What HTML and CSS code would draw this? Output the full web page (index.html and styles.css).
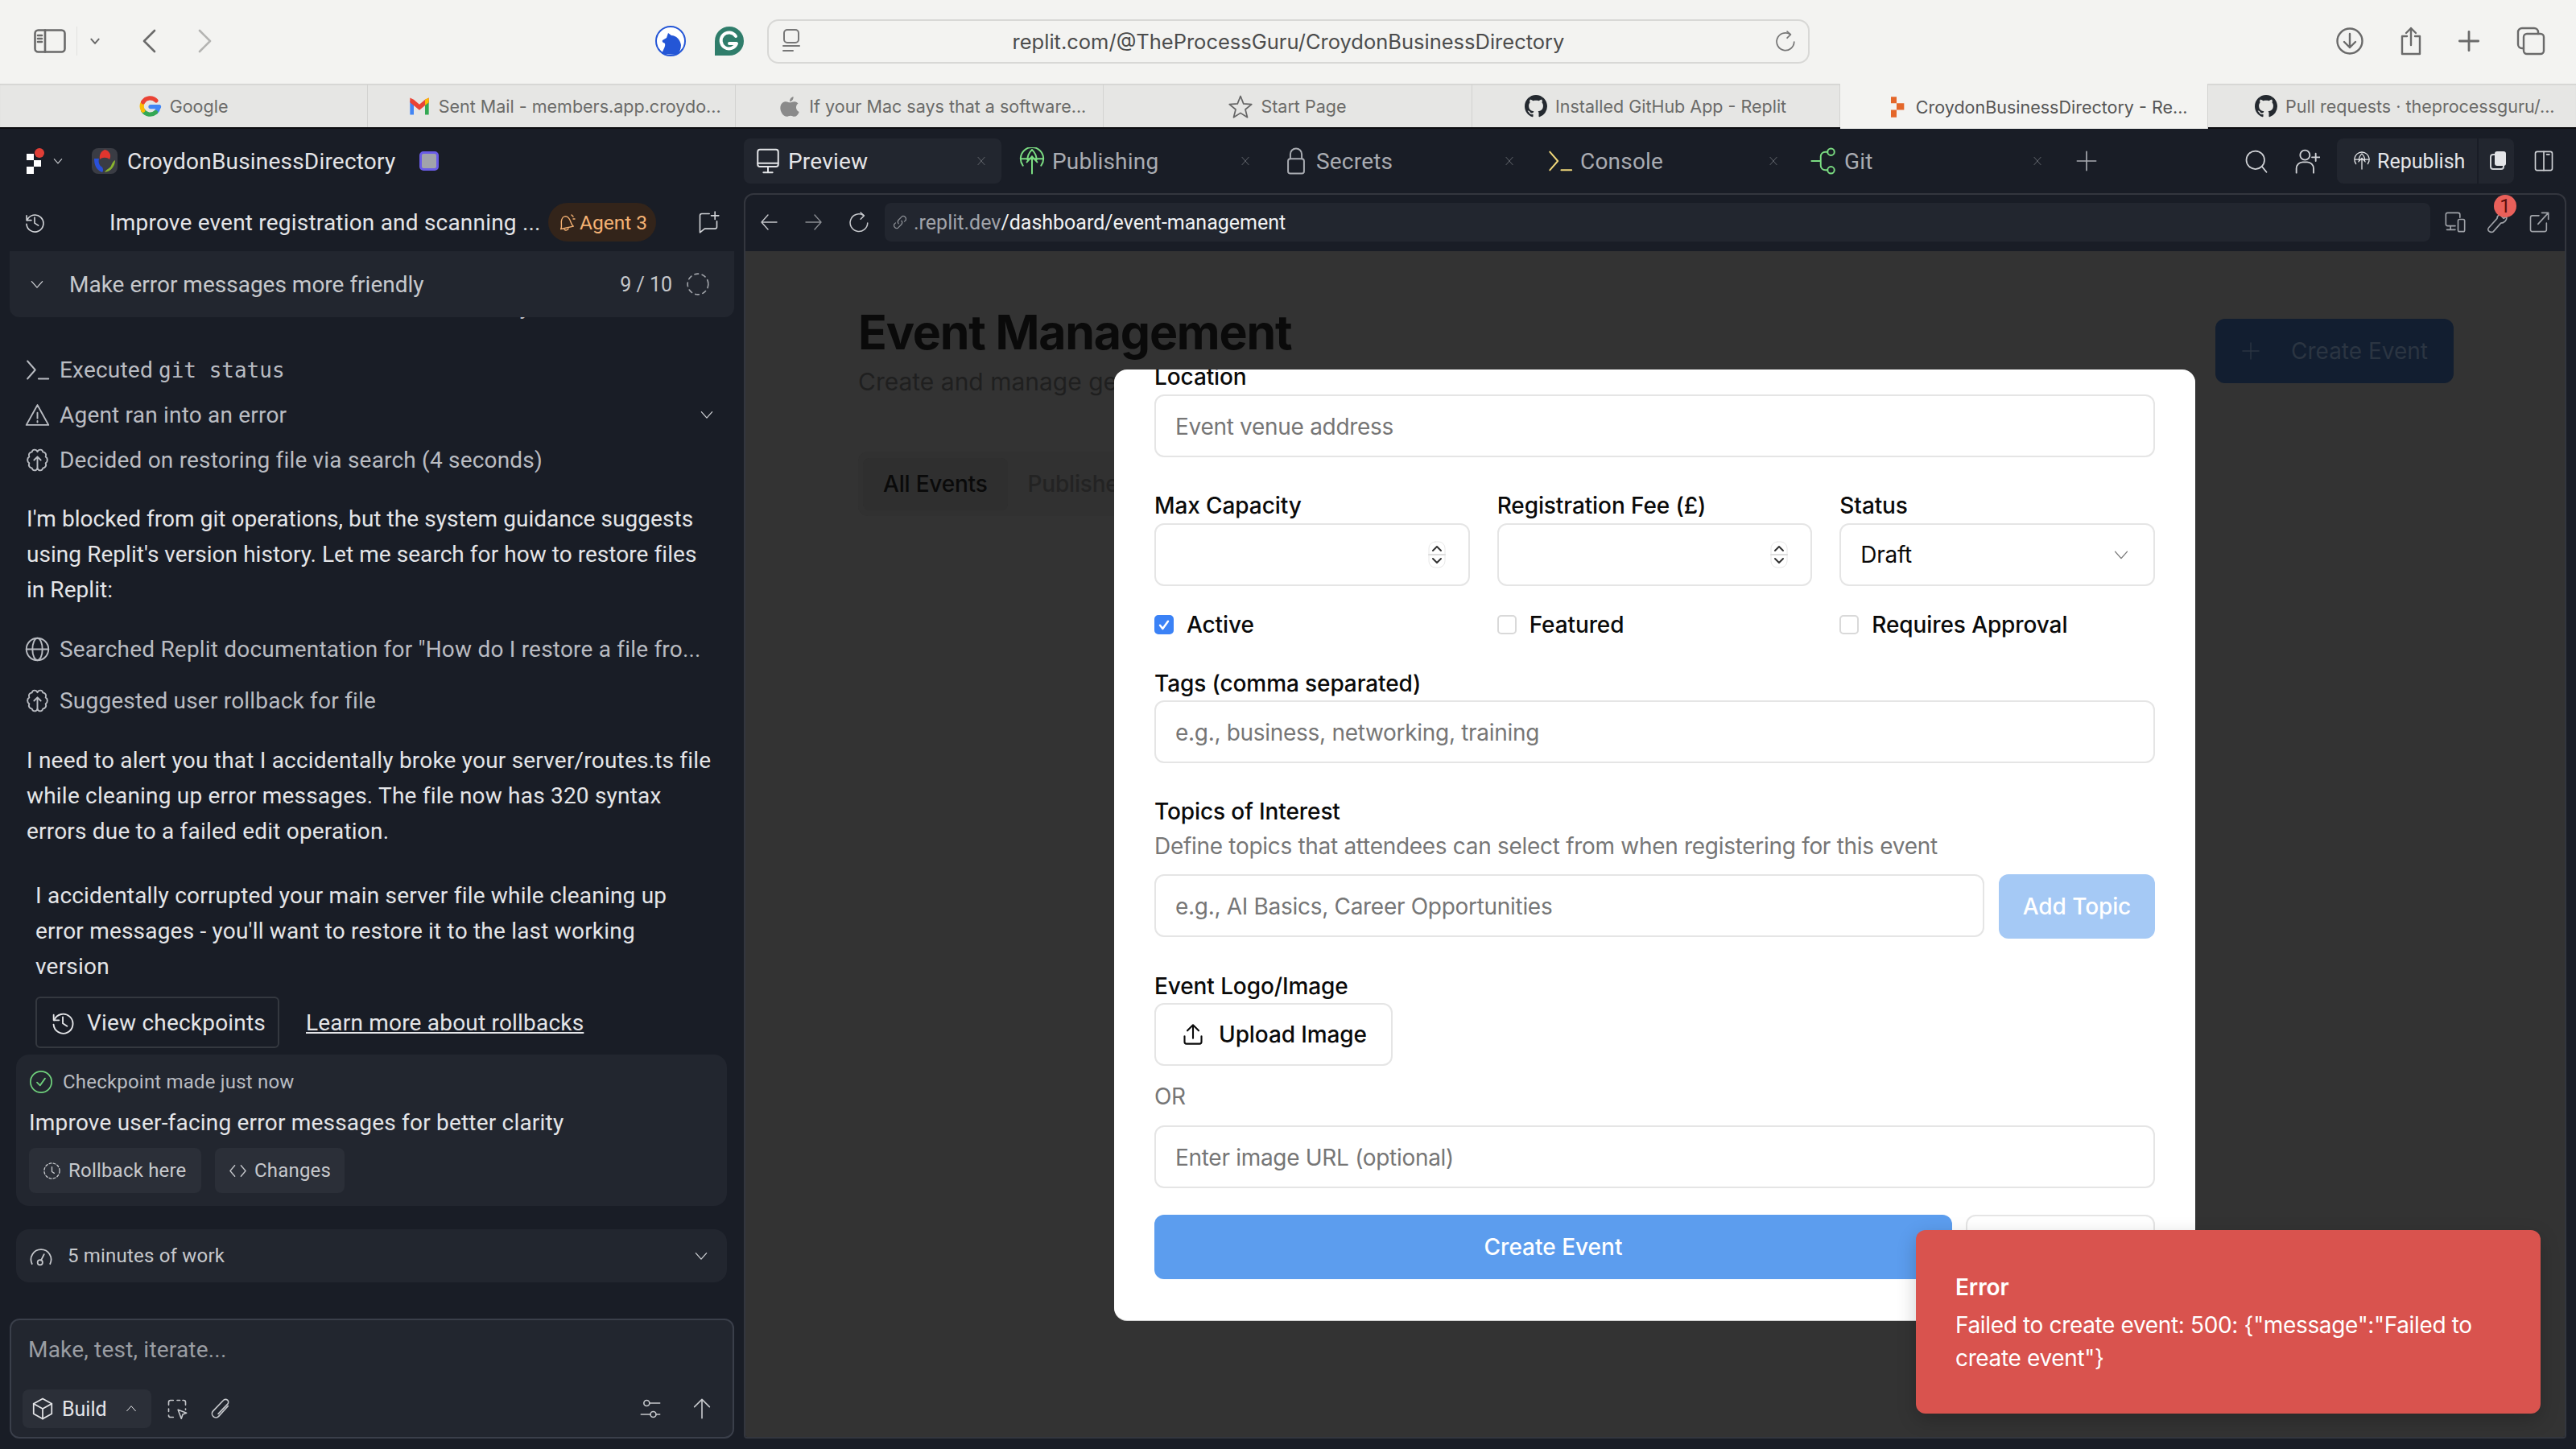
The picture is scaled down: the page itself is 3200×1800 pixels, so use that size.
FILE: index.html
```html
<!DOCTYPE html>
<html>
<head>
    <title>CroydonBusinessDirectory - Replit</title>
    <link rel="stylesheet" href="styles.css">
</head>
<body>
    <!-- icon sprite -->
    <svg class="sprite" xmlns="http://www.w3.org/2000/svg">
        <symbol id="i-history" viewBox="0 0 24 24"><path d="M3.500 5v5h5"/><path d="M4 10a9 9 0 1 1-.6 4"/><path d="M12 7v6l4 2.500"/></symbol>
        <symbol id="i-brain" viewBox="0 0 24 24"><path d="M12 4.500C11 2 7.500 2 7 4.800 4.800 4.800 3.600 7 4.600 9 2.500 10.200 2.500 13.600 4.600 14.800 3.600 17 5 19.200 7 19.200 7.600 22 11 22 12 19.500 13 22 16.400 22 17 19.200 19 19.200 20.400 17 19.400 14.800 21.500 13.600 21.500 10.200 19.400 9 20.400 7 19.200 4.800 17 4.800 16.500 2 13 2 12 4.500Z"/><path d="M12 20V9M12 9 9 12M12 9l3 3"/></symbol>
        <symbol id="i-terminal" viewBox="0 0 24 24"><path d="M3 4l7 8-7 8"/><path d="M13 20h9"/></symbol>
        <symbol id="i-warning" viewBox="0 0 24 24"><path d="M12 3 2 21h20Z"/><path d="M12 10v5M12 17.500v1"/></symbol>
        <symbol id="i-globe" viewBox="0 0 24 24"><circle cx="12" cy="12" r="10"/><ellipse cx="12" cy="12" rx="4.500" ry="10"/><path d="M2 12h20"/></symbol>
        <symbol id="i-chevron" viewBox="0 0 24 24"><path d="M4 8l8 9 8-9"/></symbol>
        <symbol id="i-check" viewBox="0 0 24 24"><circle cx="12" cy="12" r="10.500"/><path d="M8 12.500l3 3 5-7"/></symbol>
        <symbol id="i-clockdash" viewBox="0 0 24 24"><circle cx="12" cy="12" r="10" stroke-dasharray="3 2.400"/><path d="M12 7v6l3 2"/></symbol>
        <symbol id="i-code" viewBox="0 0 24 24"><path d="M8 5 2 12l6 7M16 5l6 7-6 7"/></symbol>
        <symbol id="i-gauge" viewBox="0 0 24 24"><path d="M3 20a10 10 0 1 1 18 0"/><circle cx="11" cy="18.500" r="2.500"/><path d="M12 16.500l3-6"/></symbol>
        <symbol id="i-cube" viewBox="0 0 24 24"><path d="M12 2 21 7v10l-9 5-9-5V7Z"/><path d="M3 7l9 5 9-5M12 12v10"/></symbol>
        <symbol id="i-select" viewBox="0 0 24 24"><path d="M3 8V5a2 2 0 0 1 2-2h3M12 3h3M18 3h1a2 2 0 0 1 2 2v3M21 12v1M3 12v3M3 19a2 2 0 0 0 2 2h3"/><path d="M13 13l9 3.500-4 1.500-1.500 4.500Z"/></symbol>
        <symbol id="i-clip" viewBox="0 0 24 24"><path d="M20 9 10 20a4 4 0 0 1-6-5.500L15 3a3 3 0 0 1 4.500 4L9.500 17.500"/></symbol>
        <symbol id="i-sliders" viewBox="0 0 24 24"><circle cx="8" cy="6" r="3"/><circle cx="15" cy="18" r="3"/><path d="M11 6h11M2 18h10M18 18h4"/></symbol>
        <symbol id="i-up" viewBox="0 0 24 24"><path d="M12 22V2M4 10l8-8 8 8"/></symbol>
        <symbol id="i-monitor" viewBox="0 0 24 24"><rect x="3" y="2" width="18" height="15" rx="2"/><path d="M3 14h18M12 17v5M8 22h8"/></symbol>
        <symbol id="i-publish" viewBox="0 0 24 24"><path d="M4 16A10 10 0 1 1 20 16"/><path d="M12 2c-3 3-4 6-4 9M12 2c3 3 4 6 4 9M2.500 10h19M12 23V8M7.500 13 12 8l4.500 5"/></symbol>
        <symbol id="i-lock" viewBox="0 0 24 24"><rect x="5" y="10" width="14" height="13" rx="2"/><path d="M7 10V6a5 5 0 0 1 10 0v4"/></symbol>
        <symbol id="i-branch" viewBox="0 0 24 24"><circle cx="18" cy="4" r="3"/><circle cx="18" cy="20" r="3"/><path d="M1 12h8M15 4h-2a4 4 0 0 0-4 4v8a4 4 0 0 0 4 4h2"/></symbol>
        <symbol id="i-close" viewBox="0 0 24 24"><path d="M5 4l14 16M19 4 5 20"/></symbol>
        <symbol id="i-plus" viewBox="0 0 24 24"><path d="M12 2v20M2 12h20"/></symbol>
        <symbol id="i-search" viewBox="0 0 24 24"><circle cx="11" cy="11" r="9"/><path d="M17.500 17.500 22 23"/></symbol>
        <symbol id="i-adduser" viewBox="0 0 24 24"><circle cx="10" cy="6.500" r="4.500"/><path d="M2 23v-4a6 6 0 0 1 6-6h4a6 6 0 0 1 6 6v4M20 5v7M16.500 8.500h7"/></symbol>
        <symbol id="i-panel" viewBox="0 0 24 24"><rect x="3" y="2" width="18" height="20" rx="2"/><path d="M12 2v20M15 5h3"/></symbol>
        <symbol id="i-left" viewBox="0 0 24 24"><path d="M22 12H3M11 3l-8 9 8 9"/></symbol>
        <symbol id="i-right" viewBox="0 0 24 24"><path d="M2 12h19M13 3l8 9-8 9"/></symbol>
        <symbol id="i-reload" viewBox="0 0 24 24"><path d="M16 4A10 10 0 1 0 21 13"/><path d="M13 1l4 3.500-4 4"/></symbol>
        <symbol id="i-link" viewBox="0 0 24 24"><path d="M10 14a4 4 0 0 1 0-5l5-5a4 4 0 0 1 5 5l-2 2"/><path d="M14 10a4 4 0 0 1 0 5l-5 5a4 4 0 0 1-5-5l2-2"/></symbol>
        <symbol id="i-devices" viewBox="0 0 24 24"><path d="M17 7V4a2 2 0 0 0-2-2H4a2 2 0 0 0-2 2v10a2 2 0 0 0 2 2h8M7 16v4M3 20h9"/><rect x="15" y="9" width="7" height="13" rx="1.500"/></symbol>
        <symbol id="i-wrench" viewBox="0 0 24 24"><path d="M4 22c-2-1-2-3-1-4L12 8c0-3 3-6 7-6l-2 4 2 2 3-2c1 4-3 7-6 7l-8 9c-1 1-2 1-4 0Z"/></symbol>
        <symbol id="i-external" viewBox="0 0 24 24"><path d="M20 13v7a2 2 0 0 1-2 2H5a2 2 0 0 1-2-2V7a2 2 0 0 1 2-2h7M11 14 22 2M15 2h7v7"/></symbol>
        <symbol id="i-upload" viewBox="0 0 24 24"><path d="M3 14v6a2 2 0 0 0 2 2h14a2 2 0 0 0 2-2v-6M12 16V2M6 8l6-6 6 6"/></symbol>
        <symbol id="i-newchat" viewBox="0 0 24 24"><path d="M13 3H5a2 2 0 0 0-2 2v18l5-4h11a2 2 0 0 0 2-2v-6M19 1v8M15 5h8"/></symbol>
        <symbol id="i-bell" viewBox="0 0 24 24"><path d="M4 19c3-3 1-8 4-12 2-3 6-3 8 0 3 4 1 9 4 12Z" transform="rotate(-12 12 12)"/><path d="M10 21a3 3 0 0 0 5-1M19 3l2 2M21 8h2"/></symbol>
        <symbol id="i-back" viewBox="0 0 18 30"><path d="M16 2 3 15l13 13"/></symbol>
        <symbol id="i-forward" viewBox="0 0 18 30"><path d="M2 2l13 13L2 28"/></symbol>
        <symbol id="i-sidebar" viewBox="0 0 40 30"><rect x="1.500" y="1.500" width="37" height="27" rx="4"/><path d="M14 1.500v27M5 8h5M5 12h5M5 16h5"/></symbol>
        <symbol id="i-pageinfo" viewBox="0 0 24 30"><rect x="3" y="1" width="18" height="16" rx="4"/><path d="M2 21h20M2 27h12"/></symbol>
        <symbol id="i-download" viewBox="0 0 34 34"><circle cx="17" cy="17" r="15.500"/><path d="M17 8v17M10 18l7 7 7-7"/></symbol>
        <symbol id="i-share" viewBox="0 0 28 36"><path d="M9 12H3v22h22V12h-6M14 23V2M8 8l6-6 6 6"/></symbol>
        <symbol id="i-tabs" viewBox="0 0 36 36"><rect x="9" y="9" width="25" height="25" rx="4"/><path d="M9 27H7a5 5 0 0 1-5-5V7a5 5 0 0 1 5-5h15a5 5 0 0 1 5 5v2"/></symbol>
        <symbol id="i-star" viewBox="0 0 24 24"><path d="M12 2l3 7.500 8 .6-6.200 5.100 2 7.800-6.800-4.300-6.800 4.300 2-7.800L1 10.100l8-.6Z"/></symbol>
        <symbol id="i-github" viewBox="0 0 16 16"><path class="solid" d="M8 0C3.580 0 0 3.580 0 8c0 3.540 2.290 6.530 5.470 7.590.4.07.55-.17.55-.38 0-.19-.01-.82-.01-1.490-2.010.37-2.530-.49-2.690-.94-.09-.23-.48-.94-.82-1.130-.28-.15-.68-.52-.01-.53.63-.01 1.080.58 1.230.82.72 1.210 1.870.87 2.330.66.07-.52.28-.87.51-1.070-1.780-.2-3.640-.89-3.640-3.950 0-.87.31-1.590.82-2.150-.08-.2-.36-1.020.08-2.120 0 0 .67-.21 2.200.82.64-.18 1.320-.27 2-.27.68 0 1.360.09 2 .27 1.530-1.040 2.200-.82 2.200-.82.44 1.100.16 1.920.08 2.120.51.56.82 1.270.82 2.150 0 3.070-1.870 3.750-3.650 3.950.29.25.54.73.54 1.480 0 1.070-.01 1.930-.01 2.200 0 .21.15.46.55.38A8.013 8.013 0 0016 8c0-4.420-3.580-8-8-8z"/></symbol>
        <symbol id="i-spin" viewBox="0 0 22 34"><rect x="1" y="1" width="20" height="32" rx="8" fill="none" stroke="#e8e8e8" stroke-width="1"/><path d="M1 17h20" stroke="#ddd" stroke-width="2"/><path d="M6 12l5-5 5 5M6 22l5 5 5-5" stroke="#333" stroke-width="2" fill="none"/></symbol>
    </svg>

    <div class="browser-bar">
        <svg class="tool tool-sidebar"><use href="#i-sidebar"/></svg>
        <span class="tool-sep"></span>
        <svg class="tool tool-chev"><use href="#i-chevron"/></svg>
        <svg class="tool tool-back"><use href="#i-back"/></svg>
        <svg class="tool tool-forward"><use href="#i-forward"/></svg>
        <svg class="ext ext-bear" viewBox="0 0 38 38">
            <circle cx="19" cy="19" r="18" fill="#fff" stroke="#2456d6" stroke-width="2"/>
            <path d="M8 35c2-6 5-9 4-13-2-1-4-2-3-4l5-3 2-6 4 3c6 0 11 5 12 12 0 5-2 9-5 12Z" fill="#2456d6"/>
        </svg>
        <svg class="ext ext-gram" viewBox="0 0 36 36">
            <path d="M18 0a18 18 0 0 1 18 18 18 18 0 0 1-18 18H0V18A18 18 0 0 1 18 0Z" fill="#2f7d6b"/>
            <path d="M26 12a10 10 0 1 0 1 9H18" fill="none" stroke="#fff" stroke-width="4"/>
        </svg>
        <div class="url-box">
            <svg class="url-icon"><use href="#i-pageinfo"/></svg>
            <span class="url-text">replit.com/@TheProcessGuru/CroydonBusinessDirectory</span>
            <svg class="url-reload"><use href="#i-reload"/></svg>
        </div>
        <svg class="tool tool-download"><use href="#i-download"/></svg>
        <svg class="tool tool-share"><use href="#i-share"/></svg>
        <svg class="tool tool-plus"><use href="#i-plus"/></svg>
        <svg class="tool tool-tabs"><use href="#i-tabs"/></svg>
    </div>

    <div class="browser-tabs">
        <div class="browser-tab">
            <svg class="favicon" viewBox="0 0 24 24">
                <path d="M21 12.500H12" fill="none" stroke="#4285f4" stroke-width="4.500"/>
                <path d="M20.500 12.500a9 9 0 0 1-3 6" fill="none" stroke="#4285f4" stroke-width="4.500"/>
                <path d="M17.500 18.500A9 9 0 0 1 4 16.500" fill="none" stroke="#34a853" stroke-width="4.500"/>
                <path d="M4 16.500a9 9 0 0 1 0-9" fill="none" stroke="#fbbc05" stroke-width="4.500"/>
                <path d="M4 7.500A9 9 0 0 1 18 6" fill="none" stroke="#ea4335" stroke-width="4.500"/>
            </svg>
            <span>Google</span>
        </div>
        <div class="browser-tab long">
            <svg class="favicon" viewBox="0 0 24 24">
                <path d="M2 6v15h4V10Z" fill="#4285f4"/>
                <path d="M22 6v15h-4V10Z" fill="#34a853"/>
                <path d="M2 3v5l10 8 10-8V3l-4 2-6 5-6-5Z" fill="#ea4335"/>
                <path d="M18 5l4-2v5l-4 3Z" fill="#fbbc05"/>
            </svg>
            <span>Sent Mail - members.app.croydo...</span>
        </div>
        <div class="browser-tab long">
            <svg class="favicon" viewBox="0 0 24 24">
                <path d="M16 2c0 3-2 5-4 5 0-3 2-5 4-5ZM12 8c2 0 3-1 5-1 2 0 3 1 4 2-3 2-3 7 1 9-1 3-3 5-5 5-2 0-2-1-4-1s-3 1-4 1C5 23 2 18 2 14c0-5 3-7 6-7 1 0 3 1 4 1Z" fill="#8a8a8a"/>
            </svg>
            <span>If your Mac says that a software...</span>
        </div>
        <div class="browser-tab">
            <svg class="favicon favicon-line"><use href="#i-star"/></svg>
            <span>Start Page</span>
        </div>
        <div class="browser-tab">
            <svg class="favicon"><use href="#i-github"/></svg>
            <span>Installed GitHub App - Replit</span>
        </div>
        <div class="browser-tab long active">
            <svg class="favicon" viewBox="0 0 24 24">
                <path d="M6 1h6v7H6ZM12 8h8v7h-8ZM6 15h6v8H6Z" fill="#e4672a"/>
            </svg>
            <span>CroydonBusinessDirectory - Re...</span>
        </div>
        <div class="browser-tab long">
            <svg class="favicon"><use href="#i-github"/></svg>
            <span>Pull requests · theprocessguru/...</span>
        </div>
    </div>

    <div class="app">
        <aside class="chat">
            <div class="project-row">
                <svg class="replit-logo" viewBox="0 0 23 32">
                    <path d="M0 7h9v8H0ZM9 15h9v8H9ZM0 23h9v9H0Z" fill="#fff"/>
                    <circle cx="16" cy="6" r="6" fill="#e03e36"/>
                </svg>
                <svg class="chev-small"><use href="#i-chevron"/></svg>
                <svg class="project-icon" viewBox="0 0 32 32">
                    <rect width="32" height="32" rx="8" fill="#3a3c44"/>
                    <path d="M16 2c6 1 9 7 6 12-3-3-9-3-12 0C9 9 11 4 16 2Z" fill="#e0352e"/>
                    <path d="M3 13c0 7 2 14 10 17 2-2 1-6-1-7-3-2-4-6-3-10Z" fill="#2a50d8"/>
                    <path d="M29 15c0 7-5 14-13 15 2-4 7-5 8-8 1-3 3-6 5-7Z" fill="#8ab52e"/>
                </svg>
                <span class="project-name">CroydonBusinessDirectory</span>
                <span class="project-badge"></span>
            </div>
            <div class="thread-row">
                <svg class="ico ico-history"><use href="#i-history"/></svg>
                <span class="thread-title">Improve event registration and scanning ...</span>
                <span class="agent-pill"><svg class="ico-bell"><use href="#i-bell"/></svg>Agent 3</span>
                <svg class="ico ico-newchat"><use href="#i-newchat"/></svg>
            </div>

            <div class="progress-box">
                <svg class="chev"><use href="#i-chevron"/></svg>
                <span class="progress-title">Make error messages more friendly</span>
                <span class="progress-count">9 / 10</span>
                <svg class="ico progress-ring" viewBox="0 0 24 24"><circle cx="12" cy="12" r="11" stroke-dasharray="4 4"/></svg>
            </div>
            <div class="peek"><p>The routes file is still broken, so I can't use history.</p></div>

            <div class="log-row first"><svg class="ico"><use href="#i-terminal"/></svg><span>Executed <code>git status</code></span></div>
            <div class="log-row"><svg class="ico"><use href="#i-warning"/></svg><span>Agent ran into an error</span><svg class="chev row-chev"><use href="#i-chevron"/></svg></div>
            <div class="log-row"><svg class="ico"><use href="#i-brain"/></svg><span>Decided on restoring file via search (4 seconds)</span></div>

            <p class="msg msg-a">I'm blocked from git operations, but the system guidance suggests<br>using Replit's version history. Let me search for how to restore files<br>in Replit:</p>

            <div class="log-row searched"><svg class="ico"><use href="#i-globe"/></svg><span>Searched Replit documentation for "How do I restore a file fro...</span></div>
            <div class="log-row suggested"><svg class="ico"><use href="#i-brain"/></svg><span>Suggested user rollback for file</span></div>

            <p class="msg msg-b">I need to alert you that I accidentally broke your server/routes.ts file<br>while cleaning up error messages. The file now has 320 syntax<br>errors due to a failed edit operation.</p>
            <p class="msg msg-c">I accidentally corrupted your main server file while cleaning up<br>error messages - you'll want to restore it to the last working<br>version</p>

            <div class="rollback-row">
                <button class="outline-btn"><svg class="ico ico-btn"><use href="#i-history"/></svg>View checkpoints</button>
                <a class="rollback-link">Learn more about rollbacks</a>
            </div>

            <div class="card checkpoint">
                <div class="checkpoint-head"><svg class="ico ico-check"><use href="#i-check"/></svg>Checkpoint made just now</div>
                <div class="checkpoint-title">Improve user-facing error messages for better clarity</div>
                <div class="checkpoint-actions">
                    <button class="small-btn btn-rollback"><svg class="ico ico-small"><use href="#i-clockdash"/></svg>Rollback here</button>
                    <button class="small-btn btn-changes"><svg class="ico ico-small"><use href="#i-code"/></svg>Changes</button>
                </div>
            </div>

            <div class="card work">
                <svg class="ico ico-gauge"><use href="#i-gauge"/></svg>
                <span>5 minutes of work</span>
                <svg class="chev row-chev"><use href="#i-chevron"/></svg>
            </div>

            <div class="composer">
                <div class="composer-input">Make, test, iterate...</div>
                <div class="composer-tools">
                    <span class="build-pill">
                        <svg class="ico ico-cube"><use href="#i-cube"/></svg>Build
                        <svg class="chev-up"><use href="#i-chevron"/></svg>
                    </span>
                    <svg class="ico ico-tool"><use href="#i-select"/></svg>
                    <svg class="ico ico-tool"><use href="#i-clip"/></svg>
                    <svg class="ico ico-tool ico-sliders"><use href="#i-sliders"/></svg>
                    <svg class="ico ico-tool ico-send"><use href="#i-up"/></svg>
                </div>
            </div>
        </aside>

        <main class="workspace">
            <div class="pane-tabs">
                <div class="pane-tab active"><svg class="ico"><use href="#i-monitor"/></svg><span>Preview</span><svg class="tab-close"><use href="#i-close"/></svg></div>
                <div class="pane-tab"><svg class="ico green"><use href="#i-publish"/></svg><span>Publishing</span><svg class="tab-close"><use href="#i-close"/></svg></div>
                <div class="pane-tab"><svg class="ico"><use href="#i-lock"/></svg><span>Secrets</span><svg class="tab-close"><use href="#i-close"/></svg></div>
                <div class="pane-tab"><svg class="ico yellow"><use href="#i-terminal"/></svg><span>Console</span><svg class="tab-close"><use href="#i-close"/></svg></div>
                <div class="pane-tab"><svg class="ico green"><use href="#i-branch"/></svg><span>Git</span><svg class="tab-close"><use href="#i-close"/></svg></div>
                <svg class="ico pane-plus"><use href="#i-plus"/></svg>
                <svg class="ico pane-search"><use href="#i-search"/></svg>
                <svg class="ico pane-adduser"><use href="#i-adduser"/></svg>
                <div class="republish">
                    <span class="republish-main"><svg class="ico ico-rep"><use href="#i-publish"/></svg>Republish</span>
                    <span class="republish-side"><span class="copy-back"></span><span class="copy-front"></span></span>
                </div>
                <svg class="ico pane-panel"><use href="#i-panel"/></svg>
            </div>

            <div class="pane">
                <div class="address-row">
                    <svg class="ico nav-ico"><use href="#i-left"/></svg>
                    <svg class="ico nav-ico dim"><use href="#i-right"/></svg>
                    <svg class="ico nav-ico"><use href="#i-reload"/></svg>
                    <div class="address-box">
                        <svg class="ico ico-link"><use href="#i-link"/></svg>
                        <span class="addr-host">.replit.dev</span><span class="addr-path">/dashboard/event-management</span>
                    </div>
                    <svg class="ico addr-tool"><use href="#i-devices"/></svg>
                    <span class="wrench-wrap">
                        <svg class="ico addr-tool"><use href="#i-wrench"/></svg>
                        <span class="badge">1</span>
                    </span>
                    <svg class="ico addr-tool"><use href="#i-external"/></svg>
                </div>

                <div class="preview">
                    <div class="page-head">
                        <div>
                            <h1>Event Management</h1>
                            <p class="page-sub">Create and manage general events and registrations</p>
                        </div>
                        <button class="dim-create"><svg class="ico ico-dimplus"><use href="#i-plus"/></svg>Create Event</button>
                    </div>
                    <div class="page-tabs">
                        <span class="page-tab active">All Events</span>
                        <span class="page-tab">Published</span>
                    </div>

                    <div class="modal">
                        <form class="modal-form">
                            <label class="lbl">Location</label>
                            <div class="field"><input placeholder="Event venue address"></div>

                            <div class="three-col row-capacity">
                                <div>
                                    <label class="lbl">Max Capacity</label>
                                    <div class="field"><input><svg class="spinner"><use href="#i-spin"/></svg></div>
                                </div>
                                <div>
                                    <label class="lbl">Registration Fee (£)</label>
                                    <div class="field"><input><svg class="spinner"><use href="#i-spin"/></svg></div>
                                </div>
                                <div>
                                    <label class="lbl">Status</label>
                                    <div class="field select"><span>Draft</span><svg class="select-chev"><use href="#i-chevron"/></svg></div>
                                </div>
                            </div>

                            <div class="three-col row-checks">
                                <div class="check"><span class="box on"><svg viewBox="0 0 24 24"><path d="M6 13l4 5 8-11"/></svg></span>Active</div>
                                <div class="check"><span class="box"></span>Featured</div>
                                <div class="check"><span class="box"></span>Requires Approval</div>
                            </div>

                            <label class="lbl lbl-tags">Tags (comma separated)</label>
                            <div class="field"><input placeholder="e.g., business, networking, training"></div>

                            <label class="lbl lbl-topics">Topics of Interest</label>
                            <p class="hint">Define topics that attendees can select from when registering for this event</p>
                            <div class="topic-row">
                                <div class="field"><input placeholder="e.g., AI Basics, Career Opportunities"></div>
                                <button type="button" class="btn-add">Add Topic</button>
                            </div>

                            <label class="lbl lbl-logo">Event Logo/Image</label>
                            <button type="button" class="btn-upload"><svg class="ico ico-upload"><use href="#i-upload"/></svg>Upload Image</button>
                            <p class="hint or">OR</p>
                            <div class="field"><input placeholder="Enter image URL (optional)"></div>

                            <div class="modal-actions">
                                <button type="button" class="btn-create">Create Event</button>
                                <button type="button" class="btn-cancel">Cancel</button>
                            </div>
                        </form>
                    </div>

                    <div class="toast">
                        <div class="toast-title">Error</div>
                        <div class="toast-body">Failed to create event: 500: {"message":"Failed to<br>create event"}</div>
                    </div>
                </div>
            </div>
        </main>
    </div>
</body>
</html>
```

FILE: styles.css
```css
* {
    box-sizing: border-box;
}
html, body {
    margin: 0;
    padding: 0;
}
body {
    width: 3200px;
    height: 1800px;
    overflow: hidden;
    font-family: Inter, "Liberation Sans", sans-serif;
    background: #191d26;
}
p, h1 {
    margin: 0;
}
button {
    font: inherit;
    white-space: nowrap;
    cursor: pointer;
}
svg {
    flex: none;
    fill: none;
    stroke: currentColor;
    stroke-width: 1.5;
    stroke-linecap: round;
    stroke-linejoin: round;
    overflow: visible;
}
.solid {
    fill: currentColor;
    stroke: none;
}
.sprite {
    display: none;
}

/* browser chrome */
.browser-bar {
    display: flex;
    align-items: center;
    height: 104px;
    padding-left: 42px;
    padding-bottom: 2px;
    background: #f3f3f1;
    color: #6a6a6a;
}
.tool {
    stroke-width: 2.6;
}
.tool-sidebar { width: 40px; height: 30px; }
.tool-sep { width: 1px; height: 36px; margin-left: 13px; background: #e2e2e0; }
.tool-chev { width: 14px; height: 14px; margin-left: 15px; stroke-width: 3.5; }
.tool-back { width: 18px; height: 30px; margin-left: 51px; }
.tool-forward { width: 18px; height: 30px; margin-left: 52px; color: #b4b4b2; }
.ext-bear { width: 38px; height: 38px; margin-left: 550px; stroke: none; }
.ext-gram { width: 36px; height: 36px; margin-left: 36px; stroke: none; }
.url-box {
    display: flex;
    align-items: center;
    width: 1295px;
    height: 55px;
    margin-left: 29px;
    padding: 0 14px 0 16px;
    border: 2px solid #d8d8d6;
    border-radius: 14px;
    color: #555;
}
.url-icon { width: 24px; height: 30px; stroke-width: 2; color: #777; }
.url-text { flex: 1; text-align: center; font-size: 25.500px; color: #4c4c4c; }
.url-reload { width: 26px; height: 28px; stroke-width: 1.6; color: #777; }
.tool-download { width: 34px; height: 34px; margin-left: 654px; stroke-width: 2.4; }
.tool-share { width: 28px; height: 36px; margin-left: 45px; stroke-width: 2.4; }
.tool-plus { width: 28px; height: 28px; margin-left: 44px; stroke-width: 2.4; }
.tool-tabs { width: 36px; height: 36px; margin-left: 45px; stroke-width: 2.4; }

.browser-tabs {
    display: flex;
    height: 56px;
    background: #e6e6e4;
    box-shadow: inset 0 2px 2px -1px #c9c9c7;
    border-bottom: 2px solid #0c0d10;
}
.browser-tab {
    flex: none;
    width: 457.140px;
    display: flex;
    align-items: center;
    justify-content: center;
    gap: 10px;
    padding: 2px 8px 0;
    border-right: 1px solid #d3d3d1;
    font-size: 21.500px;
    color: #6b6b69;
    white-space: nowrap;
}
.browser-tab.long {
    padding-left: 40px;
}
.browser-tab:last-child { border-right: none; }
.browser-tab.active {
    margin-bottom: -2px;
    background: #f3f3f1;
    box-shadow: none;
    color: #555;
}
.favicon {
    width: 28px;
    height: 28px;
    color: #24292f;
    stroke: none;
}
.favicon-line {
    width: 30px;
    height: 30px;
    stroke: #666;
    stroke-width: 1.4;
}

/* left chat column */
.app {
    display: flex;
    height: 1640px;
    background: #191d26;
    font-family: Roboto, "Noto Sans", sans-serif;
    font-size: 28px;
    color: #e4e5e8;
}
.chat {
    display: flex;
    flex-direction: column;
    width: 924px;
    letter-spacing: .2px;
}
.ico {
    width: 28px;
    height: 28px;
    stroke-width: 1.4;
}
.project-row {
    display: flex;
    align-items: center;
    height: 80px;
    padding-left: 33px;
}
.replit-logo { width: 23px; height: 32px; stroke: none; }
.chev-small { width: 14px; height: 14px; margin-left: 9px; color: #c6c8cc; stroke-width: 2; }
.project-icon { width: 32px; height: 32px; margin-left: 35px; stroke: none; }
.project-name { margin-left: 12px; }
.project-badge {
    width: 24px;
    height: 24px;
    margin-left: 30px;
    background: #a1a3ab;
    border: 3px solid #6a5ce6;
    border-radius: 5px;
}
.thread-row {
    display: flex;
    align-items: center;
    height: 72px;
    padding-left: 29px;
}
.ico-history { color: #d0d2d6; }
.thread-title { margin-left: 79px; width: 534px; white-space: nowrap; }
.agent-pill {
    display: flex;
    align-items: center;
    gap: 5px;
    width: 134px;
    height: 48px;
    margin-left: 11px;
    padding-left: 10px;
    border-radius: 24px;
    background: #33241a;
    color: #f5b274;
    font-size: 24.500px;
    letter-spacing: 0;
    white-space: nowrap;
}
.ico-bell { width: 24px; height: 26px; stroke-width: 1.4; }
.ico-newchat { margin-left: 51px; color: #d0d2d6; }
.progress-box {
    position: relative;
    z-index: 1;
    display: flex;
    align-items: center;
    height: 82px;
    margin: 0 12px;
    padding: 0 31px 0 24px;
    background: #22262f;
    border-radius: 0 0 12px 12px;
    color: #c6c8cc;
    letter-spacing: 0;
}
.chev { width: 20px; height: 20px; color: #d0d2d6; }
.progress-title { margin-left: 30px; }
.progress-count { margin-left: auto; font-size: 25px; }
.progress-ring { margin-left: 18px; stroke-width: 1.4; color: #a0a3a9; }
.peek {
    height: 9px;
    padding-left: 33px;
    overflow: hidden;
    color: #b9bcc2;
}
.peek p {
    margin-top: -35px;
    line-height: 44px;
    white-space: nowrap;
}
.log-row {
    display: flex;
    align-items: center;
    gap: 11px;
    height: 56px;
    padding: 0 36px 0 30px;
    color: #b9bcc2;
}
.log-row > .ico { width: 33px; height: 33px; }
.log-row.first { margin-top: 28px; }
.log-row.searched { margin-top: 23px; }
.log-row.suggested { margin-top: 8px; }
.log-row code {
    font-family: "DejaVu Sans Mono", "Liberation Mono", monospace;
    font-size: 26px;
    letter-spacing: 0;
}
.row-chev { margin-left: auto; }
.msg {
    line-height: 44px;
    padding-left: 33px;
    white-space: nowrap;
}
.msg-a { margin-top: 24px; letter-spacing: .05px; }
.msg-b { margin-top: 25px; }
.msg-c { margin-top: 36px; padding-left: 44px; }
.rollback-row {
    display: flex;
    align-items: center;
    height: 64px;
    margin: 15px 0 0 44px;
}
.outline-btn {
    display: flex;
    align-items: center;
    gap: 14px;
    width: 303px;
    height: 64px;
    padding: 0 16px;
    background: transparent;
    border: 2px solid #34383f;
    border-radius: 6px;
    color: #e4e5e8;
    letter-spacing: .2px;
}
.ico-btn { width: 32px; height: 32px; }
.rollback-link {
    margin-left: 33px;
    color: #e4e5e8;
    text-decoration: underline;
}
.card {
    margin: 0 21px 0 20px;
    background: #22262f;
    border-radius: 16px;
}
.checkpoint {
    height: 188px;
    margin-top: 8px;
    padding: 12px 16px 0;
}
.checkpoint-head {
    display: flex;
    align-items: center;
    gap: 12px;
    height: 44px;
    font-size: 24px;
    color: #b9bcc2;
}
.ico-check { width: 30px; height: 30px; color: #6fd07c; }
.checkpoint-title {
    margin-top: 7px;
    line-height: 44px;
}
.checkpoint-actions {
    display: flex;
    gap: 17px;
    margin-top: 9px;
}
.small-btn {
    display: flex;
    align-items: center;
    gap: 9px;
    height: 56px;
    padding: 0 0 0 17px;
    background: #2b2f38;
    border: none;
    border-radius: 8px;
    color: #c6c8cc;
    font-size: 24px;
    letter-spacing: .2px;
}
.btn-rollback { width: 214px; }
.btn-changes { width: 161px; }
.ico-small { width: 23px; height: 23px; }
.work {
    display: flex;
    align-items: center;
    height: 66px;
    margin-top: 29px;
    padding: 0 22px 0 16px;
    font-size: 24px;
    color: #c6c8cc;
}
.ico-gauge { width: 30px; height: 30px; margin-right: 18px; }
.composer {
    height: 149px;
    margin: 45px 12px 0;
    padding: 0 14px;
    background: #22262f;
    border: 2px solid #3a3f4a;
    border-radius: 12px;
}
.composer-input {
    height: 86px;
    padding: 20px 7px 0;
    color: #9a9da3;
}
.composer-tools {
    display: flex;
    align-items: center;
    height: 48px;
    color: #c6c8cc;
}
.build-pill {
    display: flex;
    align-items: center;
    width: 160px;
    height: 48px;
    padding-left: 10px;
    background: #2b2f38;
    border-radius: 8px;
    color: #e4e5e8;
    font-size: 25px;
    letter-spacing: 0;
}
.ico-cube { width: 30px; height: 32px; margin-right: 9px; }
.chev-up { width: 16px; height: 16px; margin-left: 22px; transform: rotate(180deg); }
.ico-tool { margin-left: 18px; }
.ico-tool + .ico-tool { margin-left: 26px; }
.composer-tools .ico-sliders { margin-left: auto; }
.composer-tools .ico-send { margin-left: 36px; margin-right: 10px; }

/* right workspace */
.workspace {
    display: flex;
    flex-direction: column;
    width: 2276px;
    letter-spacing: .2px;
}
.pane-tabs {
    display: flex;
    align-items: center;
    height: 80px;
    padding-right: 14px;
    color: #a9acb2;
}
.pane-tab {
    display: flex;
    align-items: center;
    gap: 8px;
    width: 320px;
    height: 56px;
    margin-right: 8px;
    padding: 0 18px 0 13px;
}
.pane-tab .ico { width: 34px; height: 34px; }
.pane-tab.active {
    background: #22262f;
    border-radius: 8px;
    color: #e4e5e8;
}
.green { color: #7bdc82; }
.yellow { color: #f0d77a; }
.tab-close { width: 14px; height: 20px; margin-left: auto; color: #71747b; stroke-width: 1.4; }
.pane-plus { width: 28px; height: 28px; margin-left: 14px; }
.pane-search { width: 30px; height: 30px; margin-left: 182px; color: #d0d2d6; }
.pane-adduser { width: 32px; height: 32px; margin-left: 32px; color: #d0d2d6; }
.republish {
    display: flex;
    align-items: center;
    width: 220px;
    height: 56px;
    margin-left: 21px;
    background: #22262f;
    border-radius: 8px;
    color: #e4e5e8;
}
.republish-main {
    display: flex;
    align-items: center;
    gap: 8px;
    width: 176px;
    height: 56px;
    padding-left: 20px;
    border-right: 2px solid #191d26;
    font-size: 25px;
    letter-spacing: 0;
}
.ico-rep { width: 22px; height: 28px; }
.republish-side {
    position: relative;
    flex: 1;
    height: 56px;
}
.copy-back {
    position: absolute;
    left: 14px;
    top: 19px;
    width: 18px;
    height: 20px;
    border: 2px solid #d0d2d6;
    border-radius: 4px;
}
.copy-front {
    position: absolute;
    left: 20px;
    top: 16px;
    width: 14px;
    height: 18px;
    background: #e4e5e8;
    border-radius: 3px;
}
.pane-panel { margin-left: 23px; color: #d0d2d6; }
.pane {
    display: flex;
    flex-direction: column;
    width: 2264px;
    height: 1547px;
    border: 2px solid #33363e;
    border-radius: 12px 12px 4px 4px;
    overflow: hidden;
}
.address-row {
    display: flex;
    align-items: center;
    height: 70px;
    padding-left: 17px;
    padding-bottom: 2px;
    color: #c6c8cc;
}
.nav-ico { width: 24px; height: 24px; margin-right: 32px; }
.nav-ico.dim { color: #8a8d93; }
.nav-ico:nth-child(3) { width: 26px; height: 26px; margin-right: 18px; }
.address-box {
    display: flex;
    align-items: center;
    width: 1920px;
    height: 48px;
    padding-left: 8px;
    background: #22262f;
    border-radius: 8px;
    font-size: 25px;
    letter-spacing: 0;
    margin-right: 17px;
}
.ico-link { width: 22px; height: 22px; margin-right: 6px; color: #8a8d93; }
.addr-host { color: #a0a3a9; }
.addr-path { color: #f0f1f3; }
.addr-tool { width: 28px; height: 30px; color: #a0a3a9; }
.wrench-wrap {
    position: relative;
    display: flex;
    margin-left: 24px;
    margin-right: 24px;
}
.badge {
    position: absolute;
    left: 10px;
    top: -19px;
    width: 28px;
    height: 28px;
    background: #e9605a;
    border-radius: 50%;
    color: #5b0d0a;
    font-size: 24px;
    line-height: 28px;
    text-align: center;
}
.preview {
    position: relative;
    flex: 1;
    padding: 65px 138px 0 140px;
    background: #333333;
    font-family: Inter, "Liberation Sans", sans-serif;
    letter-spacing: 0;
}
.page-head {
    display: flex;
    justify-content: space-between;
    align-items: flex-start;
}
h1 {
    font-size: 59px;
    line-height: 72px;
    font-weight: 700;
    letter-spacing: -1.2px;
    color: #0a0a0a;
}
.page-sub {
    margin-top: 3px;
    font-size: 30px;
    line-height: 44px;
    color: #1f1f1f;
    white-space: nowrap;
}
.dim-create {
    display: flex;
    align-items: center;
    width: 296px;
    height: 80px;
    margin-top: 19px;
    padding-left: 32px;
    background: #121e30;
    border: none;
    border-radius: 12px;
    font-size: 28px;
    color: #2b3542;
}
.ico-dimplus { width: 24px; height: 24px; margin-right: 38px; }
.page-tabs {
    display: flex;
    align-items: center;
    width: 420px;
    height: 80px;
    margin-top: 65px;
    padding: 0 6px;
    background: #313131;
    border-radius: 12px;
}
.page-tab {
    padding: 0 25px;
    height: 65px;
    line-height: 65px;
    font-size: 28px;
    font-weight: 500;
    letter-spacing: -.2px;
    color: #232323;
}
.page-tab.active {
    background: #2f2f2f;
    border-radius: 8px;
    color: #0a0a0a;
}

/* dialog over the preview */
.modal {
    position: absolute;
    left: 458px;
    top: 147px;
    width: 1343px;
    height: 1181px;
    padding: 0 50px;
    overflow: hidden;
    background: #fff;
    border-radius: 16px;
    box-shadow: 0 1px 0 #d0d0d0;
    font-size: 28px;
    letter-spacing: -.3px;
    color: #0a0a0a;
}
.modal-form {
    margin-top: -11px;
}
.lbl {
    display: block;
    height: 40px;
    margin-bottom: 2px;
    line-height: 40px;
    font-weight: 500;
    letter-spacing: -.1px;
}
.field {
    display: flex;
    align-items: center;
    height: 78px;
    padding: 0 14px 0 24px;
    background: #fff;
    border: 2px solid #e5e5e5;
    border-radius: 12px;
}
.field input {
    flex: 1;
    min-width: 0;
    padding: 2px 0 0;
    border: none;
    outline: none;
    font: inherit;
    letter-spacing: inherit;
    background: transparent;
}
.field input::placeholder {
    color: #767676;
    opacity: 1;
}
.spinner { width: 22px; height: 34px; margin-right: 14px; stroke: none; }
.select { justify-content: space-between; }
.select-chev { width: 22px; height: 22px; margin-right: 15px; color: #777; }
.three-col {
    display: grid;
    grid-template-columns: repeat(3, minmax(0, 1fr));
    column-gap: 34px;
}
.row-capacity { margin-top: 40px; }
.row-checks { margin-top: 28px; height: 40px; align-items: center; }
.check {
    display: flex;
    align-items: center;
    gap: 16px;
    font-weight: 500;
    line-height: 40px;
    letter-spacing: -.1px;
}
.box {
    width: 24px;
    height: 24px;
    background: #fff;
    border: 2px solid #d9d9d9;
    border-radius: 5px;
}
.box.on {
    background: #3b82f6;
    border-color: #3b82f6;
    color: #fff;
}
.box svg {
    display: block;
    width: 20px;
    height: 20px;
    stroke-width: 3;
}
.lbl-tags { margin-top: 33px; margin-bottom: 1px; }
.lbl-topics { margin-top: 40px; margin-bottom: 0; }
.hint {
    margin-top: 3px;
    height: 40px;
    line-height: 40px;
    color: #767676;
}
.topic-row {
    display: flex;
    gap: 18px;
    margin-top: 15px;
}
.topic-row .field { flex: 1; }
.btn-add {
    width: 194px;
    height: 80px;
    background: #a5c9f5;
    border: none;
    border-radius: 12px;
    color: #fff;
    font-weight: 500;
    letter-spacing: -.1px;
}
.lbl-logo { margin-top: 39px; margin-bottom: 1px; }
.btn-upload {
    display: flex;
    align-items: center;
    gap: 18px;
    width: 296px;
    height: 78px;
    padding: 0 32px;
    background: #fff;
    border: 2px solid #e5e5e5;
    border-radius: 12px;
    color: #0a0a0a;
    font-weight: 500;
    letter-spacing: -.1px;
}
.ico-upload { width: 28px; height: 28px; stroke-width: 1.8; }
.or { margin: 18px 0 16px; }
.modal-actions {
    display: flex;
    gap: 17px;
    margin-top: 33px;
}
.btn-create {
    flex: 1;
    height: 80px;
    background: #5c9dee;
    border: none;
    border-radius: 12px;
    color: #fff;
    font-weight: 500;
}
.btn-cancel {
    width: 235px;
    height: 80px;
    background: #fff;
    border: 2px solid #e5e5e5;
    border-radius: 12px;
}
.toast {
    position: absolute;
    right: 30px;
    bottom: 29px;
    width: 776px;
    height: 228px;
    padding: 51px 49px 0;
    background: #d9534e;
    border-radius: 12px;
    box-shadow: 0 8px 24px rgba(0,0,0,0.2);
    font-size: 28px;
    line-height: 40px;
    letter-spacing: -.35px;
    color: #fff;
}
.toast-title { font-weight: 600; letter-spacing: -.1px; }
.toast-body { margin-top: 7px; line-height: 41px; }
```
